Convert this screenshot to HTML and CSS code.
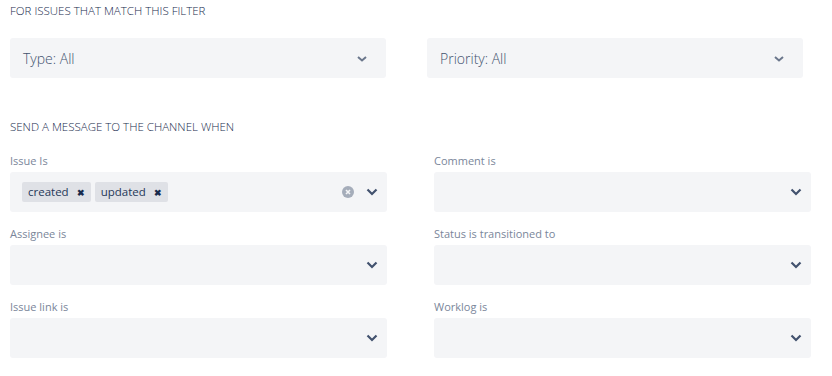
FILE: index.html
```html
<!DOCTYPE html>
<html lang="en">
<head>
    <meta charset="UTF-8">
    <title>Channel notifications</title>
    <link rel="stylesheet" href="styles.css">
</head>
<body>

<div class="page">
    <h3 class="section-title">For issues that match this filter</h3>
    <div class="filter-row">
        <div class="filter-select">
            <span>Type: All</span>
            <svg class="small-chevron" width="10" height="6" viewBox="0 0 10 6"><path d="M1 1l4 3.5L9 1" fill="none" stroke="#6b778c" stroke-width="2"/></svg>
        </div>
        <div class="filter-select">
            <span>Priority: All</span>
            <svg class="small-chevron" width="10" height="6" viewBox="0 0 10 6"><path d="M1 1l4 3.5L9 1" fill="none" stroke="#6b778c" stroke-width="2"/></svg>
        </div>
    </div>

    <h3 class="section-title second">Send a message to the channel when</h3>
    <div class="event-grid">
        <div class="field">
            <label>Issue Is</label>
            <div class="select">
                <div class="tags">
                    <span class="tag">created <b>&#10006;</b></span>
                    <span class="tag">updated <b>&#10006;</b></span>
                </div>
                <svg class="clear" width="12" height="12" viewBox="0 0 12 12"><circle cx="6" cy="6" r="6" fill="#a5adba"/><path d="M4 4l4 4M8 4l-4 4" stroke="#f4f5f7" stroke-width="1.6"/></svg>
                <svg class="chevron" width="12" height="8" viewBox="0 0 12 8"><path d="M1.5 1.5L6 6l4.5-4.5" fill="none" stroke="#42526e" stroke-width="2.2"/></svg>
            </div>
        </div>
        <div class="field">
            <label>Comment is</label>
            <div class="select">
                <svg class="chevron" width="12" height="8" viewBox="0 0 12 8"><path d="M1.5 1.5L6 6l4.5-4.5" fill="none" stroke="#42526e" stroke-width="2.2"/></svg>
            </div>
        </div>
        <div class="field">
            <label>Assignee is</label>
            <div class="select">
                <svg class="chevron" width="12" height="8" viewBox="0 0 12 8"><path d="M1.5 1.5L6 6l4.5-4.5" fill="none" stroke="#42526e" stroke-width="2.2"/></svg>
            </div>
        </div>
        <div class="field">
            <label>Status is transitioned to</label>
            <div class="select">
                <svg class="chevron" width="12" height="8" viewBox="0 0 12 8"><path d="M1.5 1.5L6 6l4.5-4.5" fill="none" stroke="#42526e" stroke-width="2.2"/></svg>
            </div>
        </div>
        <div class="field">
            <label>Issue link is</label>
            <div class="select">
                <svg class="chevron" width="12" height="8" viewBox="0 0 12 8"><path d="M1.5 1.5L6 6l4.5-4.5" fill="none" stroke="#42526e" stroke-width="2.2"/></svg>
            </div>
        </div>
        <div class="field">
            <label>Worklog is</label>
            <div class="select">
                <svg class="chevron" width="12" height="8" viewBox="0 0 12 8"><path d="M1.5 1.5L6 6l4.5-4.5" fill="none" stroke="#42526e" stroke-width="2.2"/></svg>
            </div>
        </div>
    </div>
</div>

</body>
</html>
```

FILE: styles.css
```css
body {
    margin: 0;
    background: #ffffff;
    font-family: "Open Sans", "Noto Sans", sans-serif;
    color: #172b4d;
}
.page {
    width: 832px;
    height: 376px;
    padding: 0 10px;
    box-sizing: border-box;
}
.section-title {
    margin: 0;
    padding-top: 3px;
    height: 22px;
    line-height: 16px;
    font-size: 11.5px;
    font-weight: 300;
    text-transform: uppercase;
    color: #172b4d;
}
.section-title.second {
    margin-top: 38px;
    height: 33px;
}
.filter-row {
    display: grid;
    grid-template-columns: 376px 376px;
    column-gap: 41px;
    margin-top: 13px;
}
.filter-select {
    height: 40px;
    background: #f4f5f7;
    border-radius: 3px;
    display: flex;
    align-items: center;
    justify-content: space-between;
    padding: 0 19px 0 13px;
    font-size: 14px;
    font-weight: 300;
    color: #42526e;
}
.event-grid {
    display: grid;
    grid-template-columns: 377px 377px;
    column-gap: 47px;
}
.field {
    margin-bottom: 13px;
}
.field label {
    display: block;
    height: 16px;
    line-height: 18px;
    margin-bottom: 4px;
    font-size: 11px;
    color: #7a869a;
}
.select {
    height: 40px;
    background: #f4f5f7;
    border-radius: 3px;
    display: flex;
    align-items: center;
    padding: 0 6px 0 12px;
}
.tags {
    display: flex;
    gap: 4px;
    flex: 1;
}
.tag {
    background: #dfe1e6;
    border-radius: 2px;
    height: 20px;
    line-height: 20px;
    padding: 0 6px;
    font-size: 11.5px;
    color: #253858;
}
.tag b {
    font-size: 8.5px;
    margin-left: 5px;
    color: #172b4d;
}
.clear {
    margin-right: 12px;
}
.chevron {
    margin-left: auto;
    margin-right: 3px;
}
.small-chevron {
    margin-top: 1px;
}
```
